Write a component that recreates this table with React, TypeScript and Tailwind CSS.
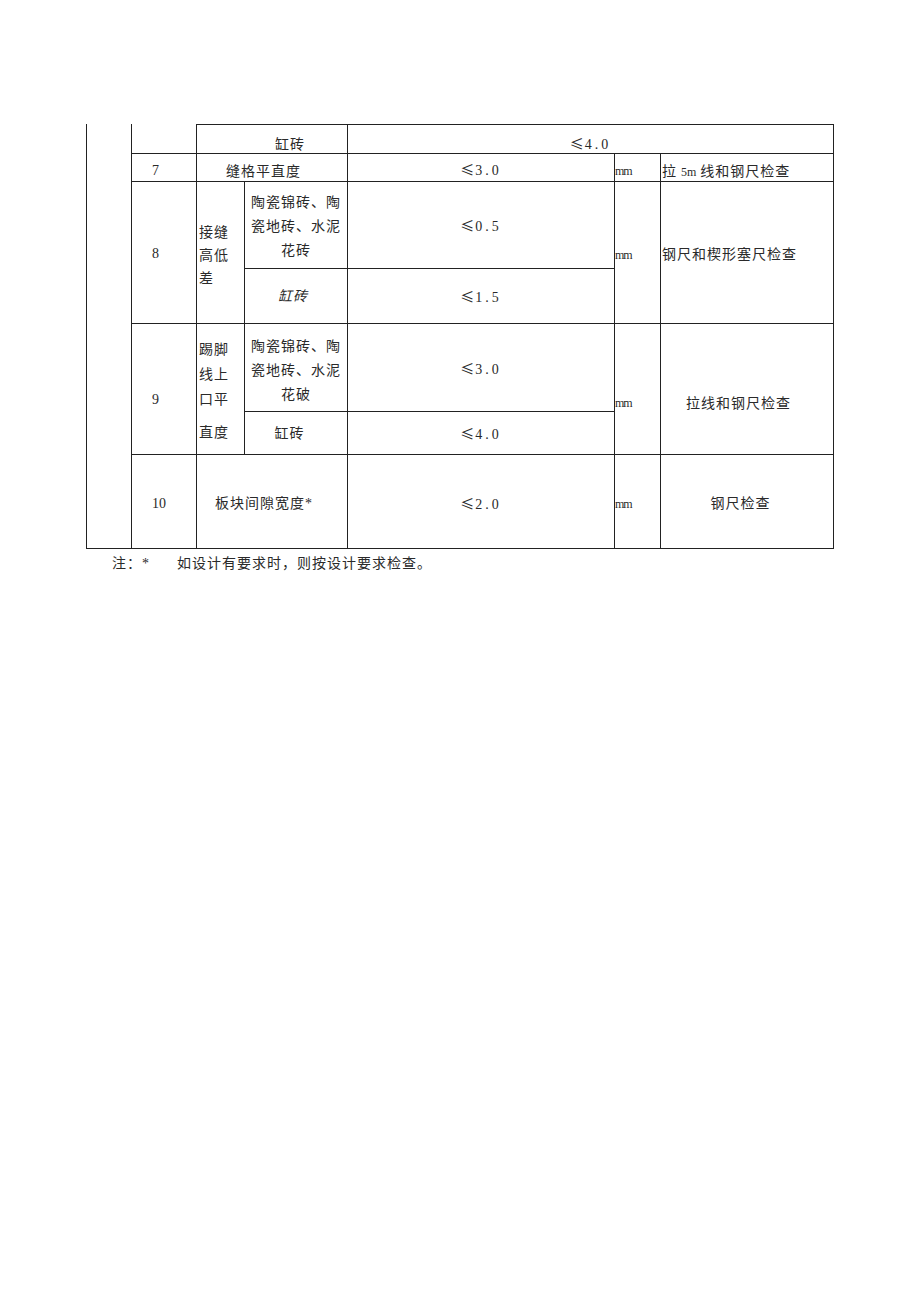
import React from "react"

const cell = "flex border-l border-t border-[#222]"
const cjk = "text-[14px] tracking-[1px]"
const val = "text-[14px] tracking-[3px]"
const unit = "text-[12px] tracking-[-1px]"

function Le({ v }: { v: string }) {
  return (
    <span>
      <span className="font-[family-name:'Noto_Sans_CJK_SC',sans-serif] tracking-[1px]">≤</span>
      {v}
    </span>
  )
}

export default function App() {
  return (
    <div className="min-h-[1301px] w-[920px] bg-white pl-[86px] pt-[124px] font-[family-name:'Liberation_Serif','Noto_Sans_CJK_SC',serif] text-[#2a2a2a]">
      <div className="grid w-[748px] grid-cols-[45px_65px_48px_103px_267px_46px_173px] grid-rows-[29px_28px_87px_55px_88px_43px_94px] border-b border-r border-[#222]">
        {/* outer left column, continued from previous page */}
        <div className="row-span-7 border-l border-[#222]" />

        {/* carried-over row */}
        <div className="border-l border-[#222]" />
        <div className={`${cell} col-span-2 items-end pl-[78px] leading-[16px] ${cjk}`}>缸砖</div>
        <div className={`${cell} col-span-3 items-end justify-center leading-[16px] ${val}`}><Le v="4.0" /></div>

        {/* 7 */}
        <div className={`${cell} items-end pb-[2px] pl-[20px] leading-[16px] text-[14px]`}>7</div>
        <div className={`${cell} col-span-2 items-end pb-[1px] pl-[29px] leading-[16px] ${cjk}`}>缝格平直度</div>
        <div className={`${cell} items-end justify-center pb-[2px] leading-[16px] ${val}`}><Le v="3.0" /></div>
        <div className={`${cell} items-end pb-[2px] leading-[16px] ${unit}`}>mm</div>
        <div className={`${cell} items-end pb-[1px] pl-[1px] leading-[16px] ${cjk}`}>
          拉<span className="mx-[4px] text-[12px] tracking-[0px]">5m</span>线和钢尺检查
        </div>

        {/* 8 */}
        <div className={`${cell} row-span-2 items-center pl-[20px] pt-[2px] text-[14px]`}>8</div>
        <div className={`${cell} row-span-2 items-center pl-[2px] pt-[6px] leading-[23px] ${cjk}`}>
          <div>接缝<br />高低<br />差</div>
        </div>
        <div className={`${cell} items-center justify-center pt-[4px] text-center leading-[24px] ${cjk}`}>
          <div>陶瓷锦砖、陶<br />瓷地砖、水泥<br />花砖</div>
        </div>
        <div className={`${cell} items-center justify-center pt-[2px] ${val}`}><Le v="0.5" /></div>
        <div className={`${cell} row-span-2 items-center pt-[4px] ${unit}`}>mm</div>
        <div className={`${cell} row-span-2 items-center pl-[1px] pt-[4px] ${cjk}`}>钢尺和楔形塞尺检查</div>
        <div className={`${cell} items-center justify-center pr-[6px] pt-[1px] italic ${cjk}`}>缸砖</div>
        <div className={`${cell} items-center justify-center pt-[1px] ${val}`}><Le v="1.5" /></div>

        {/* 9 */}
        <div className={`${cell} row-span-2 items-center pl-[20px] pt-[20px] text-[14px]`}>9</div>
        <div className={`${cell} row-span-2 items-start pl-[2px] pt-[13px] leading-[25px] ${cjk}`}>
          <div>
            踢脚<br />线上<br />口平
            <div className="mt-[8px]">直度</div>
          </div>
        </div>
        <div className={`${cell} items-center justify-center pt-[6px] text-center leading-[24px] ${cjk}`}>
          <div>陶瓷锦砖、陶<br />瓷地砖、水泥<br />花破</div>
        </div>
        <div className={`${cell} items-center justify-center pt-[2px] ${val}`}><Le v="3.0" /></div>
        <div className={`${cell} row-span-2 items-center pt-[28px] ${unit}`}>mm</div>
        <div className={`${cell} row-span-2 items-center justify-center pr-[17px] pt-[28px] ${cjk}`}>拉线和钢尺检查</div>
        <div className={`${cell} items-center justify-center pr-[13px] pt-[1px] ${cjk}`}>缸砖</div>
        <div className={`${cell} items-center justify-center pt-[1px] ${val}`}><Le v="4.0" /></div>

        {/* 10 */}
        <div className={`${cell} items-center pl-[20px] pt-[4px] text-[14px]`}>10</div>
        <div className={`${cell} col-span-2 items-center pl-[18px] pt-[4px] ${cjk}`}>板块间隙宽度*</div>
        <div className={`${cell} items-center justify-center pt-[4px] ${val}`}><Le v="2.0" /></div>
        <div className={`${cell} items-center pt-[4px] ${unit}`}>mm</div>
        <div className={`${cell} items-center justify-center pr-[13px] pt-[4px] ${cjk}`}>钢尺检查</div>
      </div>

      <div className={`mt-[5px] flex pl-[26px] leading-[20px] ${cjk}`}>
        <span className="w-[65px]">注：*</span>
        <span>如设计有要求时，则按设计要求检查。</span>
      </div>
    </div>
  )
}
